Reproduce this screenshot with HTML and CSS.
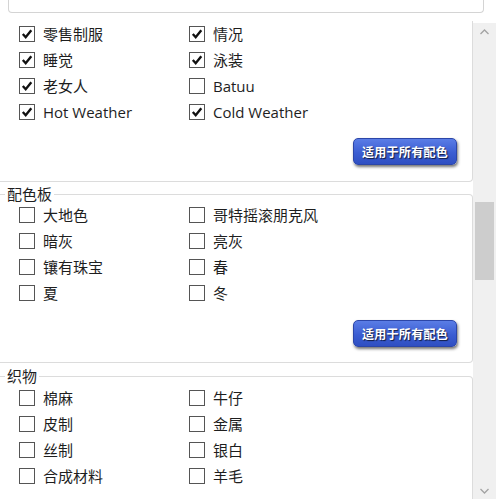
FILE: index.html
```html
<!DOCTYPE html>
<html lang="zh">
<head>
<meta charset="utf-8">
<link rel="stylesheet" href="styles.css">
</head>
<body>
<div class="top-box"></div>
<div class="main">
  <div class="content">
    <fieldset class="group first">
      <div class="grid">
        <label class="item"><span class="box checked"><svg viewBox="0 0 14 14"><path d="M2.8 7 L5.7 10.2 L11.3 3.3"/></svg></span>零售制服</label>
        <label class="item"><span class="box checked"><svg viewBox="0 0 14 14"><path d="M2.8 7 L5.7 10.2 L11.3 3.3"/></svg></span>情况</label>
        <label class="item"><span class="box checked"><svg viewBox="0 0 14 14"><path d="M2.8 7 L5.7 10.2 L11.3 3.3"/></svg></span>睡觉</label>
        <label class="item"><span class="box checked"><svg viewBox="0 0 14 14"><path d="M2.8 7 L5.7 10.2 L11.3 3.3"/></svg></span>泳装</label>
        <label class="item"><span class="box checked"><svg viewBox="0 0 14 14"><path d="M2.8 7 L5.7 10.2 L11.3 3.3"/></svg></span>老女人</label>
        <label class="item"><span class="box"></span>Batuu</label>
        <label class="item"><span class="box checked"><svg viewBox="0 0 14 14"><path d="M2.8 7 L5.7 10.2 L11.3 3.3"/></svg></span>Hot Weather</label>
        <label class="item"><span class="box checked"><svg viewBox="0 0 14 14"><path d="M2.8 7 L5.7 10.2 L11.3 3.3"/></svg></span>Cold Weather</label>
      </div>
      <div class="actions"><button class="apply">适用于所有配色</button></div>
    </fieldset>
    <fieldset class="group">
      <legend>配色板</legend>
      <div class="grid">
        <label class="item"><span class="box"></span>大地色</label>
        <label class="item"><span class="box"></span>哥特摇滚朋克风</label>
        <label class="item"><span class="box"></span>暗灰</label>
        <label class="item"><span class="box"></span>亮灰</label>
        <label class="item"><span class="box"></span>镶有珠宝</label>
        <label class="item"><span class="box"></span>春</label>
        <label class="item"><span class="box"></span>夏</label>
        <label class="item"><span class="box"></span>冬</label>
      </div>
      <div class="actions"><button class="apply">适用于所有配色</button></div>
    </fieldset>
    <fieldset class="group last">
      <legend>织物</legend>
      <div class="grid">
        <label class="item"><span class="box"></span>棉麻</label>
        <label class="item"><span class="box"></span>牛仔</label>
        <label class="item"><span class="box"></span>皮制</label>
        <label class="item"><span class="box"></span>金属</label>
        <label class="item"><span class="box"></span>丝制</label>
        <label class="item"><span class="box"></span>银白</label>
        <label class="item"><span class="box"></span>合成材料</label>
        <label class="item"><span class="box"></span>羊毛</label>
      </div>
    </fieldset>
  </div>
  <div class="scrollbar">
    <svg class="arrow" viewBox="0 0 23 17"><path d="M7.5 11 L11.5 7 L15.5 11"/></svg>
    <div class="thumb"></div>
    <svg class="arrow down" viewBox="0 0 23 17"><path d="M7.5 7 L11.5 11 L15.5 7"/></svg>
  </div>
</div>
</body>
</html>
```

FILE: styles.css
```css
html, body {
  margin: 0;
  padding: 0;
  background: #ffffff;
  width: 496px;
  height: 499px;
  overflow: hidden;
}
body {
  font-family: "Open Sans", "Noto Sans CJK SC", sans-serif;
  font-size: 15px;
  color: #1e1e1e;
}
.top-box {
  margin-left: 8px;
  width: 474px;
  height: 12px;
  border: 1px solid #d4d4d4;
  border-top: none;
  border-radius: 0 0 4px 4px;
}
.main {
  display: flex;
  margin-top: 8px;
  height: 478px;
  overflow: hidden;
}
.content {
  width: 473px;
  flex: none;
}
.group {
  margin: 5px 0 0 0;
  padding: 0 0 15px 5px;
  border: 1px solid #dcdcdc;
  border-left: none;
  border-radius: 0 4px 4px 0;
  min-width: 0;
}
.group.first {
  margin-top: 0;
  padding-bottom: 16px;
  border-top: none;
  border-radius: 0 0 4px 0;
}
.group.last {
  margin-top: 6px;
}
.group.last .grid {
  padding-top: 1px;
}
.group legend {
  padding: 0 2px;
  margin-bottom: 1px;
  line-height: 14px;
  font-family: "Noto Sans CJK SC", sans-serif;
  font-size: 15px;
  color: #1e1e1e;
}
.grid {
  display: grid;
  grid-template-columns: 170px 170px;
  grid-auto-rows: 26px;
  padding-left: 14px;
}
.item {
  display: flex;
  align-items: center;
  gap: 8px;
  white-space: nowrap;
  line-height: 20px;
}
.box {
  width: 14px;
  height: 14px;
  border: 1px solid #555555;
  background: #ffffff;
  flex: none;
  display: flex;
}
.box svg {
  width: 14px;
  height: 14px;
}
.box svg path {
  fill: none;
  stroke: #111111;
  stroke-width: 2.4;
}
.actions {
  display: flex;
  justify-content: flex-end;
  padding-right: 15px;
  margin-top: 13px;
}
.group:not(.first) .actions {
  margin-top: 14px;
}
.apply {
  width: 104px;
  height: 27px;
  border: 1px solid #2c46a8;
  border-radius: 5px;
  background: linear-gradient(#5a7de6, #3b5dd2 55%, #2f4fc2);
  box-shadow: 1px 2px 3px rgba(0, 0, 0, 0.55);
  color: #ffffff;
  font-family: "Noto Sans CJK SC", sans-serif;
  font-size: 12px;
  font-weight: 700;
  letter-spacing: 0.3px;
  text-shadow: 1px 1px 1px rgba(0, 0, 0, 0.7);
  padding: 0;
}
.scrollbar {
  width: 23px;
  flex: none;
  margin-top: 2px;
  background: #f0f0f0;
  display: flex;
  flex-direction: column;
}
.arrow {
  width: 23px;
  height: 17px;
  flex: none;
}
.arrow path {
  fill: none;
  stroke: #a3a3a3;
  stroke-width: 1.3;
}
.arrow.down {
  margin-top: auto;
}
.thumb {
  margin: 162px 2px 0 2px;
  height: 78px;
  background: #cdcdcd;
}
```
